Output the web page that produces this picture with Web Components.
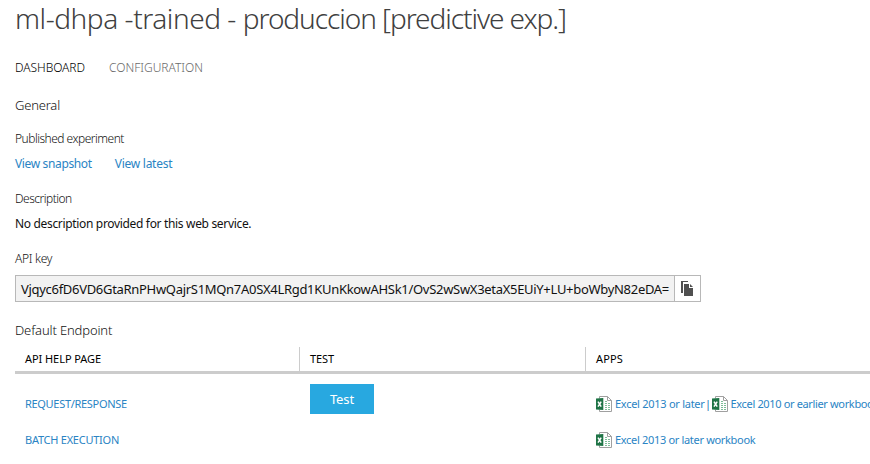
<!DOCTYPE html>
<html lang="en">
<head>
<meta charset="utf-8">
<title>Web service dashboard</title>
<style>
html,body{margin:0;height:464px;overflow:hidden;background:#fff}
body{font-family:"Noto Sans","Open Sans",sans-serif;color:#111}
</style>
</head>
<body>
<service-dashboard></service-dashboard>
<script>
function define(name, html) {
  const template = document.createElement('template');
  template.innerHTML = html;
  customElements.define(name, class extends HTMLElement {
    constructor() {
      super();
      this.attachShadow({mode: 'open'}).appendChild(template.content.cloneNode(true));
    }
  });
}

define('page-title', `
<style>:host{display:block;font-size:28px;line-height:36px;font-weight:300;letter-spacing:-.44px;color:#404040;white-space:nowrap}::slotted(span){letter-spacing:-1.055px}</style><slot></slot>`);

define('tab-bar', `
<style>:host{display:flex;gap:24px;margin-top:22px;font-size:12px;line-height:20px;font-weight:300}</style><slot></slot>`);

define('tab-item', `
<style>:host{display:block;color:#6a6a6a;white-space:nowrap;letter-spacing:0}:host([active]){color:#000;letter-spacing:-.05px}</style><slot></slot>`);

define('section-title', `
<style>:host{display:block;font-size:13px;line-height:20px;font-weight:300;letter-spacing:var(--track,-.1px);color:#111}</style><slot></slot>`);

define('field-block', `
<style>
:host{display:block;margin-top:15px;font-size:12px;line-height:20px}
.label{font-weight:300;letter-spacing:var(--track,-.51px);color:#111}
.value{display:flex;gap:23px;margin-top:5px;letter-spacing:-.33px;color:#111}
</style><div class="label"><slot name="label"></slot></div><div class="value"><slot></slot></div>`);

define('text-link', `
<style>:host{display:inline-block;color:#2a84c4;white-space:nowrap;letter-spacing:var(--track,-.27px)}</style><slot></slot>`);

define('copy-icon', `
<style>:host{display:block;width:13px;height:15px}svg{display:block}</style>
<svg width="13" height="15" viewBox="0 0 13 15"><path fill="#505050" d="M0 0h7v1H2v11H0z"/><path fill="#505050" d="M3 3h5v4h4v8H3z"/><path fill="#505050" d="M9 3l3 3H9z"/></svg>`);

define('key-field', `
<style>
:host{display:flex;box-sizing:border-box;width:686px;height:27px;border:1px solid #b8b8b8}
.key{flex:1;background:#f2f2f2;padding-left:5px;font-size:13px;line-height:26px;letter-spacing:-.301px;white-space:nowrap;color:#111}
.copy{width:25px;border-left:1px solid #b8b8b8;display:flex;align-items:center;justify-content:center;background:#fff}
</style><div class="key"><slot></slot></div><div class="copy"><copy-icon></copy-icon></div>`);

define('excel-icon', `
<style>:host{display:block;width:16px;height:16px;flex:none}svg{display:block}</style>
<svg width="16" height="16" viewBox="0 0 16 16">
<path d="M3.5 2.5v-2h8l4 4v11h-12v-2" fill="#fff" stroke="#a0a0a0"/><path d="M11.5.5v4h4" fill="none" stroke="#a0a0a0"/>
<path d="M9 5.5h2M9 7.5h2M9 9.5h2M9 11.5h2M9 13.5h2M12 7.5h2M12 9.5h2M12 11.5h2M12 13.5h2" stroke="#7dbd98"/>
<path d="M0 2.6L7.3 2v12L0 13.4z" fill="#1f7446"/><path d="M2 5.6l3.2 5M5.2 5.6L2 10.6" stroke="#fff" stroke-width="1.5"/></svg>`);

define('app-link', `
<style>:host{display:flex;gap:3px;align-items:center}</style><excel-icon></excel-icon><text-link><slot></slot></text-link>`);

define('action-button', `
<style>:host{display:block;width:64px;height:30px;background:#28a8e0;color:#fff;font-size:13px;line-height:30px;text-align:center;letter-spacing:-.1px}</style><slot></slot>`);

define('endpoint-row', `
<style>
:host{display:grid;grid-template-columns:285px 286px 1fr;height:36px;font-size:11px;line-height:20px}
div{padding-left:10px;padding-top:10px;display:flex;align-items:flex-start;white-space:nowrap}
.test{padding-top:0}
</style><div><slot name="help"></slot></div><div class="test"><slot name="test"></slot></div><div><slot name="apps"></slot></div>`);

define('endpoint-table', `
<style>
:host{display:block;margin-top:7px}
header{display:grid;grid-template-columns:285px 286px 1fr;height:24px;border-bottom:3px solid #ccc;font-size:11px;line-height:24px;color:#000}
header span{padding-left:10px;box-sizing:border-box}
header span:not(:last-child){border-right:1px solid #ccc}
.rows{padding-top:10px}
</style>
<header><span style="letter-spacing:-.06px">API HELP PAGE</span><span style="letter-spacing:-.1px">TEST</span><span style="letter-spacing:.1px">APPS</span></header>
<div class="rows"><slot></slot></div>`);

define('app-list', `
<style>:host{display:flex;align-items:center;color:#1a6fb0}</style><slot></slot>`);

define('service-dashboard', `
<style>
:host{display:block;padding-left:15px;height:464px;box-sizing:border-box;overflow:hidden}
.general{margin-top:17px;--track:-.2px}
.first{margin-top:14px}
.key{--track:-.3px}
key-field{margin-top:1px}
.endpoint{margin-top:18px;--track:-.13px}
.sep{width:7px;text-align:center}
</style>
<page-title>ml-dhpa -trained - <span>produccion [predictive exp.]</span></page-title>
<tab-bar><tab-item active>DASHBOARD</tab-item><tab-item>CONFIGURATION</tab-item></tab-bar>
<section-title class="general">General</section-title>
<field-block class="first"><span slot="label">Published experiment</span><text-link style="--track:-.36px">View snapshot</text-link><text-link style="--track:-.26px">View latest</text-link></field-block>
<field-block><span slot="label">Description</span>No description provided for this web service.</field-block>
<field-block class="key"><span slot="label">API key</span><key-field>Vjqyc6fD6VD6GtaRnPHwQajrS1MQn7A0SX4LRgd1KUnKkowAHSk1/OvS2wSwX3etaX5EUiY+LU+boWbyN82eDA=</key-field></field-block>
<section-title class="endpoint">Default Endpoint</section-title>
<endpoint-table>
<endpoint-row><text-link slot="help" style="--track:-.31px">REQUEST/RESPONSE</text-link><action-button slot="test">Test</action-button>
<app-list slot="apps"><app-link style="--track:-.27px">Excel 2013 or later</app-link><span class="sep">|</span><app-link style="--track:-.35px">Excel 2010 or earlier workbook</app-link></app-list></endpoint-row>
<endpoint-row><text-link slot="help" style="--track:-.249px">BATCH EXECUTION</text-link><app-list slot="apps"><app-link style="--track:-.32px">Excel 2013 or later workbook</app-link></app-list></endpoint-row>
</endpoint-table>
`);
</script>
</body>
</html>
